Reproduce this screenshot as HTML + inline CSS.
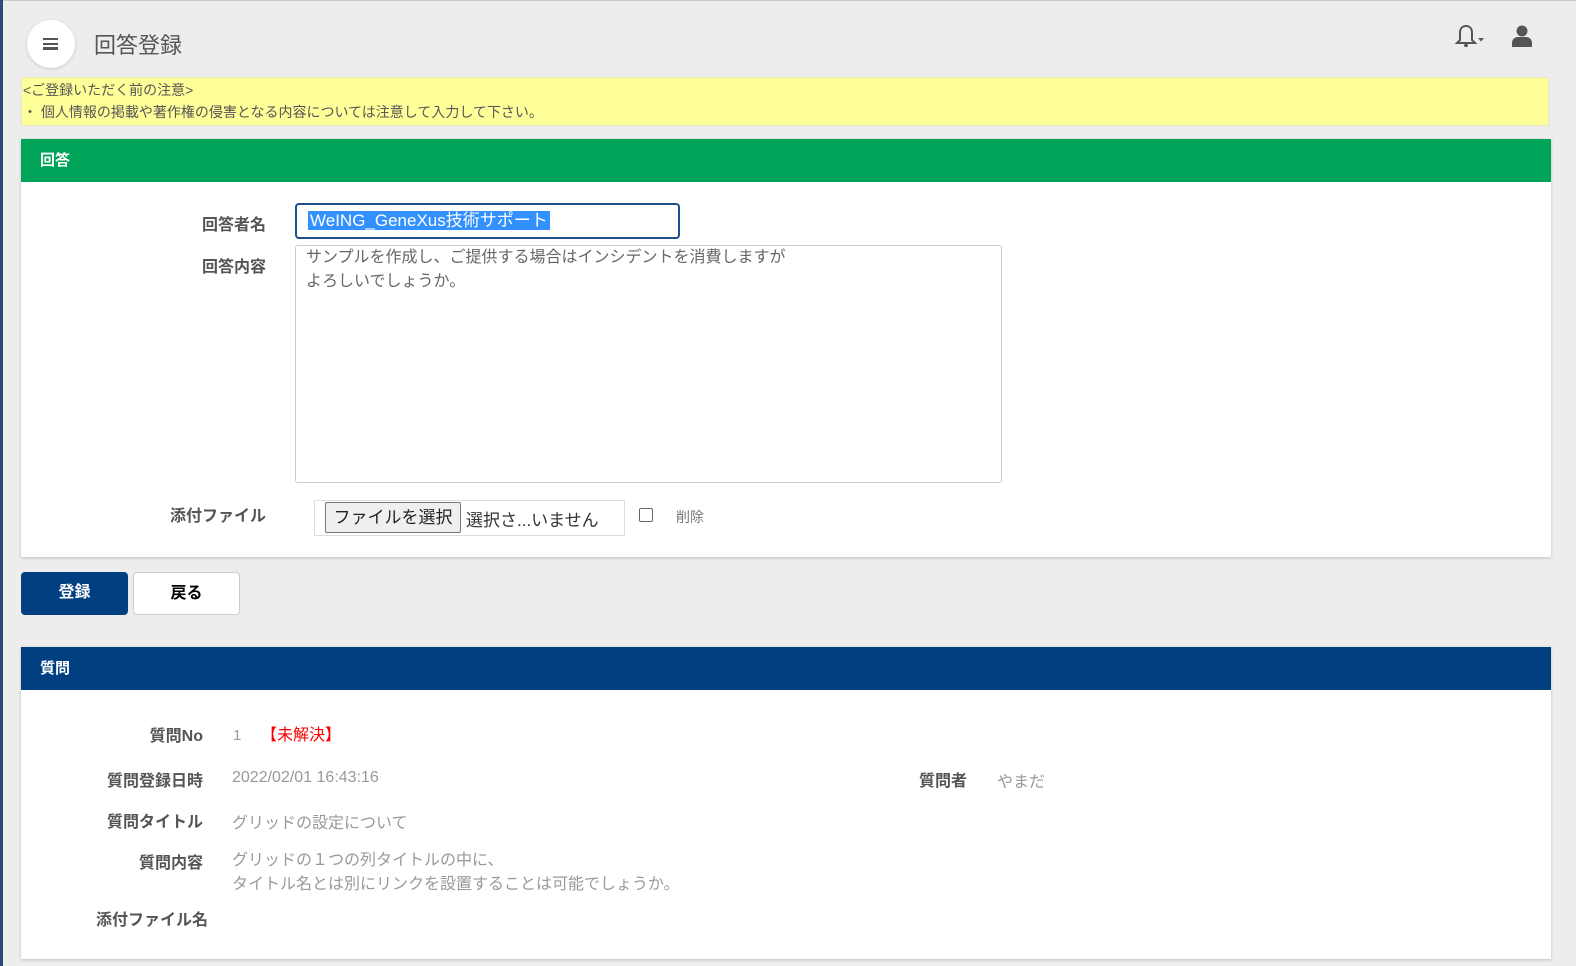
<!DOCTYPE html>
<html><head><meta charset="utf-8">
<style>
*{box-sizing:border-box;margin:0;padding:0}
html,body{width:1576px;height:966px;overflow:hidden}
body{background:#ededed;font-family:"Liberation Sans","Noto Sans CJK JP",sans-serif;position:relative;color:#555}
.lb{position:absolute;left:0;top:0;width:3px;height:966px;background:#2a4a7a}
.tb{position:absolute;left:0;top:0;width:1576px;height:1px;background:#ccc}
.menu{position:absolute;left:27px;top:20px;width:48px;height:48px;border-radius:50%;background:#fff;box-shadow:0 1px 3px rgba(0,0,0,.15)}
.menu i{position:absolute;left:16px;width:15px;height:2.5px;background:#555}
h1{position:absolute;left:94px;top:28px;font-size:22px;font-weight:normal;color:#555}
.note{position:absolute;left:21px;top:77px;width:1528px;height:49px;background:#ffff99;border:1px solid #e8e8c0;font-size:14px;color:#555;line-height:22px;padding:1px 1px}
.panel{position:absolute;left:21px;width:1530px;background:#fff;box-shadow:0 1px 3px rgba(0,0,0,.2)}
.ph{height:43px;color:#fff;font-weight:bold;font-size:15px;line-height:43px;padding-left:19px}
.lbl{position:absolute;font-weight:bold;font-size:16px;color:#555;text-align:right}
.val{position:absolute;font-size:16px;color:#999}
.btn{position:absolute;top:572px;width:107px;height:43px;border-radius:4px;font-weight:bold;font-size:16px;text-align:center;line-height:42px}
</style></head><body>
<div class="tb"></div><div class="lb"></div>
<div class="menu"><i style="top:37%"></i><i style="top:47%"></i><i style="top:57%"></i></div>
<h1>回答登録</h1>
<svg style="position:absolute;left:1454px;top:24px" width="34" height="26" viewBox="0 0 34 26"><path d="M12 2c-4 0-6 3-6 7v7l-3 3h18l-3-3V9c0-4-2-7-6-7z" fill="none" stroke="#555" stroke-width="2"/><rect x="10" y="20" width="4" height="3" rx="1.5" fill="#555"/><path d="M24 14h6l-3 3.5z" fill="#555"/></svg>
<svg style="position:absolute;left:1511px;top:25px" width="22" height="24" viewBox="0 0 22 24"><circle cx="11" cy="6" r="5.5" fill="#555"/><path d="M1 22v-4c0-4 3-6 6-6h8c3 0 6 2 6 6v4z" fill="#555"/></svg>
<div class="note">&lt;ご登録いただく前の注意&gt;<br>・ 個人情報の掲載や著作権の侵害となる内容については注意して入力して下さい。</div>

<div class="panel" style="top:139px;height:418px">
 <div class="ph" style="background:#00a458">回答</div>
 <div class="lbl" style="left:160px;top:72px;width:85px">回答者名</div>
 <div style="position:absolute;left:274px;top:64px;width:385px;height:36px;border:2px solid #1f4e8c;border-radius:4px;padding:5px 11px"><span style="background:#3390ff;color:#fff;font-size:17px;line-height:22px;padding:0 2px">WeING_GeneXus技術サポート</span></div>
 <div class="lbl" style="left:160px;top:114px;width:85px">回答内容</div>
 <div style="position:absolute;left:274px;top:106px;width:707px;height:238px;border:1px solid #ccc;border-radius:3px;padding:0 10px;font-size:16px;line-height:24px;color:#666">サンプルを作成し、ご提供する場合はインシデントを消費しますが<br>よろしいでしょうか。</div>
 <div class="lbl" style="left:130px;top:363px;width:115px">添付ファイル</div>
 <div style="position:absolute;left:293px;top:361px;width:311px;height:36px;border:1px solid #ddd"></div>
 <div style="position:absolute;left:304px;top:363px;width:136px;height:31px;border:1px solid #777;border-radius:2px;background:#efefef;font-size:17px;color:#222;text-align:center;line-height:29px">ファイルを選択</div>
 <div style="position:absolute;left:445px;top:367px;font-size:17px;color:#333">選択さ...いません</div>
 <div style="position:absolute;left:618px;top:369px;width:14px;height:14px;border:1.5px solid #666;border-radius:2px"></div>
 <div style="position:absolute;left:655px;top:368px;font-size:14px;color:#777">削除</div>
</div>

<div class="btn" style="left:21px;background:#003f80;color:#fff">登録</div>
<div class="btn" style="left:133px;background:#fff;border:1px solid #ccc;color:#000">戻る</div>

<div class="panel" style="top:647px;height:312px">
 <div class="ph" style="background:#003f80">質問</div>
 <div class="lbl" style="left:60px;top:75px;width:122px">質問No</div>
 <div class="val" style="left:212px;top:80px;font-size:15px">1</div>
 <div class="val" style="left:240px;top:74px;color:#f00">【未解決】</div>
 <div class="lbl" style="left:60px;top:120px;width:122px">質問登録日時</div>
 <div class="val" style="left:211px;top:122px">2022/02/01 16:43:16</div>
 <div class="lbl" style="left:870px;top:120px;width:76px">質問者</div>
 <div class="val" style="left:976px;top:121px">やまだ</div>
 <div class="lbl" style="left:60px;top:161px;width:122px">質問タイトル</div>
 <div class="val" style="left:211px;top:162px">グリッドの設定について</div>
 <div class="lbl" style="left:60px;top:202px;width:122px">質問内容</div>
 <div class="val" style="left:211px;top:202px;line-height:24px">グリッドの１つの列タイトルの中に、<br>タイトル名とは別にリンクを設置することは可能でしょうか。</div>
 <div class="lbl" style="left:60px;top:259px;width:127px">添付ファイル名</div>
</div>
</body></html>
